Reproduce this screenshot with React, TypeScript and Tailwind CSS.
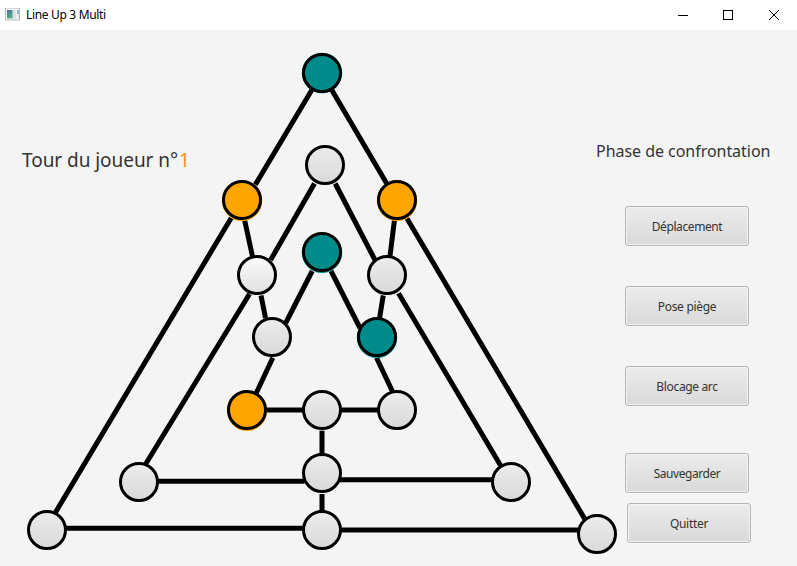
import React from "react";

type Owner = "free" | "light" | "teal" | "orange";

const FILL: Record<Owner, string> = {
  free: "url(#free)",
  light: "url(#light)",
  teal: "#008b8b",
  orange: "#ffa500",
};

const NODES: [number, number, Owner][] = [
  [322, 73, "teal"],
  [325, 165, "free"],
  [242, 200, "orange"],
  [397, 200, "orange"],
  [322, 252, "teal"],
  [257, 275, "light"],
  [387, 275, "free"],
  [272, 337, "free"],
  [377, 337, "teal"],
  [247, 410, "orange"],
  [322, 410, "free"],
  [397, 410, "free"],
  [322, 473, "free"],
  [139, 482, "free"],
  [511, 482, "free"],
  [47, 530, "free"],
  [322, 530, "free"],
  [597, 534, "free"],
];

const ARCS: [number, number, number, number][] = [
  [311.8, 90, 255.3, 184.6],
  [331.8, 90, 387, 184],
  [314.5, 183.5, 270.6, 260],
  [335.2, 183.5, 375, 260],
  [231.2, 218, 55.4, 512.5],
  [407, 218.5, 584.8, 519],
  [244.7, 220.5, 252.4, 256],
  [394.4, 220.5, 390, 256],
  [261, 295.5, 265.5, 318],
  [383.2, 295.5, 379.6, 318],
  [312.2, 271, 285.7, 323],
  [331, 271, 360, 328],
  [249.5, 294, 145.7, 464],
  [398.5, 293.3, 500.6, 465.5],
  [272.8, 357.7, 256.3, 393],
  [376.5, 357.7, 392.5, 391.5],
  [266, 410, 303, 410],
  [341, 410, 378, 410],
  [322, 430.7, 322, 454],
  [322, 494, 322, 511],
  [158, 481.2, 304.5, 481.2],
  [340, 479.7, 492.5, 479.7],
  [66, 528.2, 303, 528.2],
  [341, 530, 578.5, 530],
];

function Board() {
  return (
    <svg className="col-start-1 row-start-1 block" width="620" height="536" viewBox="0 30 620 536">
      <defs>
        <linearGradient id="free" x1="0" y1="0" x2="0" y2="1">
          <stop offset="0" stopColor="#ececec" />
          <stop offset="1" stopColor="#d9d9d9" />
        </linearGradient>
        <linearGradient id="light" x1="0" y1="0" x2="0" y2="1">
          <stop offset="0" stopColor="#fbfbfb" />
          <stop offset="1" stopColor="#e0e0e0" />
        </linearGradient>
      </defs>
      {ARCS.map(([x1, y1, x2, y2], i) => (
        <line key={i} x1={x1} y1={y1} x2={x2} y2={y2} stroke="#000" strokeWidth="5" />
      ))}
      {NODES.map(([x, y, owner], i) => (
        <g key={i}>
          {(owner === "teal" || owner === "orange") && (
            <circle cx={x} cy={y + (y === 73 ? 0 : 0.8)} r="20.2" fill={FILL[owner]} />
          )}
          <circle cx={x} cy={y} r="18.5" fill={FILL[owner]} stroke="#000" strokeWidth="3" />
        </g>
      ))}
    </svg>
  );
}

function ActionButton({ label, className }: { label: string; className: string }) {
  return (
    <button
      className={
        "h-10 w-[124px] shrink-0 rounded-[3px] border border-[#b5b5b5] bg-linear-to-b from-[#ececec] to-[#d9d9d9] pt-0.5 text-[12px] leading-4 whitespace-nowrap text-[#333] shadow-[inset_0_0_0_1px_#f3f3f3,0_1px_0_#fafafa] " +
        className
      }
    >
      {label}
    </button>
  );
}

function TitleBar() {
  return (
    <header className="flex h-[30px] items-center bg-white">
      <svg className="ml-[5px] block" width="16" height="14" viewBox="0 0 16 14">
        <defs>
          <linearGradient id="pane" x1="0" y1="0" x2="0.4" y2="1">
            <stop offset="0" stopColor="#4774a4" />
            <stop offset="1" stopColor="#55ad7c" />
          </linearGradient>
        </defs>
        <rect x="0.5" y="0" width="14" height="12" fill="#f7f7f7" stroke="#b4b8bd" />
        <rect x="2" y="2" width="5" height="8.5" fill="url(#pane)" />
        <rect x="7" y="2" width="1" height="8.5" fill="#9cc3c0" />
        <rect x="8" y="2" width="3" height="8.5" fill="#dddfe2" />
        <rect x="12" y="2" width="2" height="4" fill="#8fb5c6" />
        <rect x="12" y="6" width="2" height="4.5" fill="#dfe6e6" />
      </svg>
      <h1 className="ml-[5px] text-[12px] leading-4 tracking-[-0.33px] text-black">Line Up 3 Multi</h1>
      <svg className="mr-[17px] ml-auto block" width="102" height="12" viewBox="0 0 102 12" fill="none" stroke="#000">
        <path d="M0 6.5H10" />
        <rect x="45.5" y="1.5" width="9" height="9" />
        <path d="M91 1L101 11M101 1L91 11" />
      </svg>
    </header>
  );
}

export default function App() {
  return (
    <div className="flex h-[566px] w-[797px] flex-col overflow-hidden bg-[#f4f4f4] font-['Noto_Sans',sans-serif]">
      <TitleBar />
      <main className="flex h-[536px]">
        <section className="grid w-[590px] shrink-0">
          <Board />
          <p className="col-start-1 row-start-1 mt-[116px] ml-[22px] h-7 w-[180px] text-[19px] leading-7 tracking-[-0.05px] whitespace-nowrap text-[#333]">
            Tour du joueur n°<span className="ml-px text-[#ff8c1a]">1</span>
          </p>
        </section>
        <aside className="flex flex-col pl-[35px]">
          <h2 className="mt-[109px] -ml-[29px] h-6 text-[16px] leading-6 tracking-[-0.04px] whitespace-nowrap text-[#333]">
            Phase de confrontation
          </h2>
          <ActionButton label="Déplacement" className="mt-[43px] tracking-[-0.4px]" />
          <ActionButton label="Pose piège" className="mt-10 tracking-[-0.3px]" />
          <ActionButton label="Blocage arc" className="mt-10 tracking-[-0.35px]" />
          <ActionButton label="Sauvegarder" className="mt-[47px] tracking-[-0.45px]" />
          <ActionButton label="Quitter" className="mt-2.5 ml-0.5 tracking-[-0.3px]" />
        </aside>
      </main>
    </div>
  );
}
